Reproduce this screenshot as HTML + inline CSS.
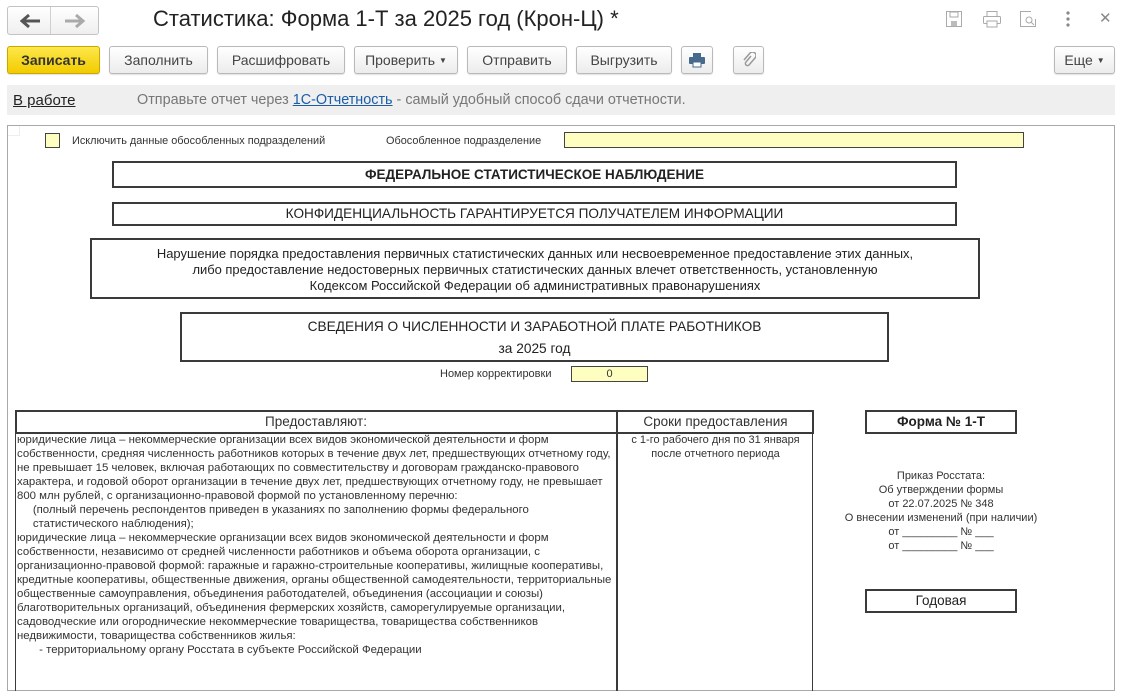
<!DOCTYPE html>
<html><head><meta charset="utf-8">
<style>
*{margin:0;padding:0;box-sizing:border-box}
body{width:1122px;height:698px;background:#fff;font-family:"Liberation Sans",Arial,sans-serif;color:#333;position:relative;overflow:hidden}
.a{position:absolute}
.btn{position:absolute;top:46px;height:28px;border:1px solid #b9b9b9;border-radius:3px;background:linear-gradient(#fff,#ececec);font-size:14px;color:#444;text-align:center;line-height:26px;box-shadow:0 1px 1px rgba(0,0,0,.12)}
.box{position:absolute;border:2px solid #3a3a3a;text-align:center;color:#222}
.t{position:absolute;white-space:nowrap;font-size:11px;color:#333;line-height:14px}
.ctr{text-align:center}
</style></head><body>
<div class="a" style="left:7px;top:6px;width:92px;height:29px;border:1px solid #c3c3c3;border-radius:3px;background:linear-gradient(#fff,#efefef)"></div>
<div class="a" style="left:50px;top:7px;width:1px;height:27px;background:#d0d0d0"></div>
<svg class="a" style="left:20px;top:13px" width="22" height="16"><path d="M2 8h18M9 2L2 8l7 6" stroke="#555" stroke-width="3" fill="none"/></svg>
<svg class="a" style="left:63px;top:13px" width="22" height="16"><path d="M2 8h18M13 2l7 6-7 6" stroke="#aaa" stroke-width="3" fill="none"/></svg>
<div class="a" style="left:153px;top:6px;font-size:22px;color:#222;white-space:nowrap">Статистика: Форма 1-Т за 2025 год (Крон-Ц) *</div>
<svg class="a" style="left:945px;top:10px" width="18" height="18"><rect x="1.5" y="1.5" width="15" height="15" fill="none" stroke="#aaa"/><rect x="5" y="2" width="8" height="5" fill="none" stroke="#aaa"/><rect x="6" y="11" width="6" height="5" fill="#bbb"/></svg>
<svg class="a" style="left:982px;top:10px" width="20" height="18"><rect x="5" y="1.5" width="10" height="5" fill="none" stroke="#aaa"/><rect x="1.5" y="6.5" width="17" height="7" rx="1" fill="none" stroke="#aaa"/><rect x="5" y="11" width="10" height="6" fill="#fff" stroke="#aaa"/></svg>
<svg class="a" style="left:1019px;top:10px" width="20" height="18"><path d="M12 1.5H1.5v15h15V9" fill="none" stroke="#aaa"/><circle cx="10" cy="10" r="3" fill="none" stroke="#aaa"/><path d="M12 12l3 3" stroke="#aaa"/></svg>
<svg class="a" style="left:1065px;top:10px" width="6" height="18"><circle cx="3" cy="3" r="1.6" fill="#888"/><circle cx="3" cy="9" r="1.6" fill="#888"/><circle cx="3" cy="15" r="1.6" fill="#888"/></svg>
<div class="a" style="left:1099px;top:9px;font-size:15px;color:#888">✕</div>
<div class="btn" style="left:7px;width:93px;background:linear-gradient(#fde74a,#f2cc00);border-color:#c9a800;font-weight:bold;color:#333">Записать</div>
<div class="btn" style="left:109px;width:99px">Заполнить</div>
<div class="btn" style="left:217px;width:128px">Расшифровать</div>
<div class="btn" style="left:354px;width:104px">Проверить <span style="font-size:8px;vertical-align:2px">▼</span></div>
<div class="btn" style="left:467px;width:100px">Отправить</div>
<div class="btn" style="left:576px;width:96px">Выгрузить</div>
<div class="btn" style="left:681px;width:32px"><svg width="18" height="16" style="margin-top:5px"><rect x="5" y="1" width="8" height="4" fill="#46698c"/><rect x="1" y="5" width="16" height="7" rx="1" fill="#46698c"/><rect x="5" y="10" width="8" height="5" fill="#fff" stroke="#46698c"/></svg></div>
<div class="btn" style="left:733px;width:31px"><svg width="14" height="16" style="margin-top:5px"><path d="M9 4L4 10a2 2 0 0 0 3 3l6-7a3.5 3.5 0 0 0-5-5L2 8" fill="none" stroke="#999" stroke-width="1.5"/></svg></div>
<div class="btn" style="left:1054px;width:61px">Еще <span style="font-size:8px;vertical-align:2px">▼</span></div>
<div class="a" style="left:7px;top:85px;width:1108px;height:30px;background:#efefef"></div>
<div class="a" style="left:13px;top:92px;font-size:15px;color:#222;text-decoration:underline">В работе</div>
<div class="a" style="left:137px;top:92px;font-size:14.4px;color:#777;white-space:nowrap">Отправьте отчет через <span style="color:#1b5ea8;text-decoration:underline">1С-Отчетность</span> - самый удобный способ сдачи отчетности.</div>
<div class="a" style="left:7px;top:125px;width:1108px;height:566px;border:1px solid #a9a9a9"></div>
<div class="a" style="left:8px;top:126px;width:12px;height:10px;border-right:1px solid #eee;border-bottom:1px solid #eee"></div>
<div class="a" style="left:45px;top:133px;width:15px;height:15px;background:#fefec0;border:1px solid #444"></div>
<div class="t" style="left:72px;top:134px;font-size:10.9px">Исключить данные обособленных подразделений</div>
<div class="t" style="left:386px;top:134px;font-size:10.9px">Обособленное подразделение</div>
<div class="a" style="left:564px;top:132px;width:460px;height:16px;background:#fefec0;border:1px solid #444"></div>
<div class="box" style="left:112px;top:161px;width:845px;height:27px;font-size:13.5px;font-weight:bold;line-height:23px">ФЕДЕРАЛЬНОЕ СТАТИСТИЧЕСКОЕ НАБЛЮДЕНИЕ</div>
<div class="box" style="left:112px;top:202px;width:845px;height:24px;font-size:13.6px;line-height:20px">КОНФИДЕНЦИАЛЬНОСТЬ ГАРАНТИРУЕТСЯ ПОЛУЧАТЕЛЕМ ИНФОРМАЦИИ</div>
<div class="box" style="left:90px;top:238px;width:890px;height:61px;font-size:12.95px;line-height:16px;padding-top:6px">Нарушение порядка предоставления первичных статистических данных или несвоевременное предоставление этих данных,<br>либо предоставление недостоверных первичных статистических данных влечет ответственность, установленную<br>Кодексом Российской Федерации об административных правонарушениях</div>
<div class="box" style="left:180px;top:312px;width:709px;height:50px;font-size:13.7px;line-height:22px;padding-top:2px">СВЕДЕНИЯ О ЧИСЛЕННОСТИ И ЗАРАБОТНОЙ ПЛАТЕ РАБОТНИКОВ<br>за 2025 год</div>
<div class="t" style="left:440px;top:367px;font-size:11px">Номер корректировки</div>
<div class="a" style="left:571px;top:366px;width:77px;height:16px;background:#fefec0;border:1px solid #444;font-size:11px;text-align:center;line-height:14px">0</div>
<div class="a" style="left:15px;top:410px;width:799px;height:24px;border:2px solid #3a3a3a"></div>
<div class="a" style="left:616px;top:410px;width:2px;height:281px;background:#3a3a3a"></div>
<div class="a" style="left:812px;top:433px;width:1px;height:258px;background:#3a3a3a"></div>
<div class="a" style="left:15px;top:433px;width:1px;height:258px;background:#3a3a3a"></div>
<div class="t ctr" style="left:16px;top:414px;width:600px;font-size:13.5px;line-height:16px">Предоставляют:</div>
<div class="t ctr" style="left:618px;top:414px;width:195px;font-size:13.5px;line-height:16px">Сроки предоставления</div>
<div class="t" style="left:17px;top:433px;line-height:14px;font-size:11.4px">юридические лица – некоммерческие организации всех видов экономической деятельности и форм<br>собственности, средняя численность работников которых в течение двух лет, предшествующих отчетному году,<br>не превышает 15 человек, включая работающих по совместительству и договорам гражданско-правового<br>характера, и годовой оборот организации в течение двух лет, предшествующих отчетному году, не превышает<br>800 млн рублей, с организационно-правовой формой по установленному перечню:<br>&nbsp;&nbsp;&nbsp;&nbsp;&nbsp;(полный перечень респондентов приведен в указаниях по заполнению формы федерального<br>&nbsp;&nbsp;&nbsp;&nbsp;&nbsp;статистического наблюдения);<br>юридические лица – некоммерческие организации всех видов экономической деятельности и форм<br>собственности, независимо от средней численности работников и объема оборота организации, с<br>организационно-правовой формой: гаражные и гаражно-строительные кооперативы, жилищные кооперативы,<br>кредитные кооперативы, общественные движения, органы общественной самодеятельности, территориальные<br>общественные самоуправления, объединения работодателей, объединения (ассоциации и союзы)<br>благотворительных организаций, объединения фермерских хозяйств, саморегулируемые организации,<br>садоводческие или огороднические некоммерческие товарищества, товарищества собственников<br>недвижимости, товарищества собственников жилья:<br>&nbsp;&nbsp;&nbsp;&nbsp;&nbsp;&nbsp;&nbsp;- территориальному органу Росстата в субъекте Российской Федерации</div>
<div class="t ctr" style="left:618px;top:433px;width:195px;font-size:11px">с 1-го рабочего дня по 31 января<br>после отчетного периода</div>
<div class="box" style="left:865px;top:410px;width:152px;height:24px;font-size:13.5px;font-weight:bold;line-height:20px">Форма № 1-Т</div>
<div class="t ctr" style="left:830px;top:469px;width:222px;font-size:11px">Приказ Росстата:<br>Об утверждении формы<br>от 22.07.2025 № 348<br>О внесении изменений (при наличии)<br>от _________ № ___<br>от _________ № ___</div>
<div class="box" style="left:865px;top:589px;width:152px;height:24px;font-size:13.5px;line-height:20px">Годовая</div>
</body></html>
